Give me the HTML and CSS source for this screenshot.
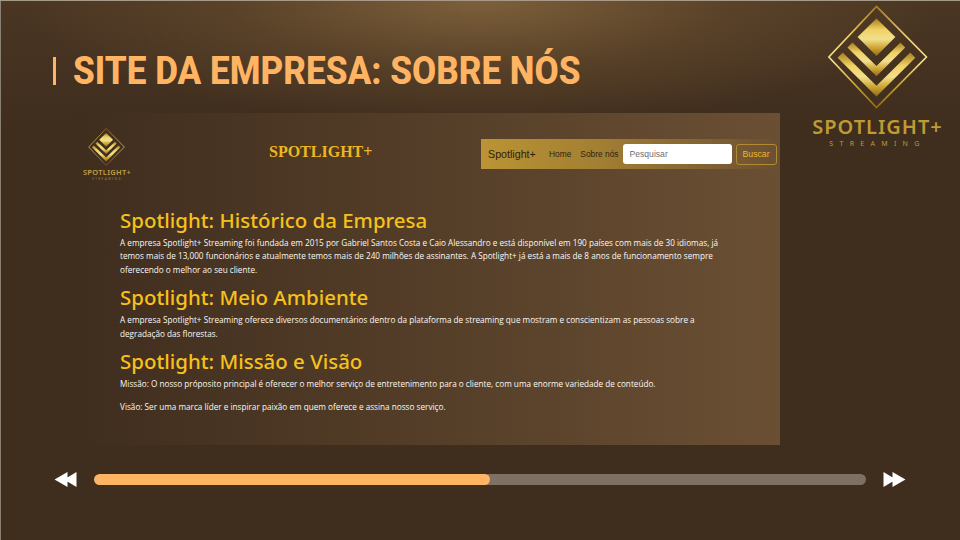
FILE: index.html
```html
<!DOCTYPE html>
<html lang="pt-BR">
<head>
    <meta charset="UTF-8">
    <title>Site da empresa: Sobre nós</title>
    <link rel="stylesheet" href="styles.css">
</head>
<body>
    <svg class="defs" width="0" height="0">
        <defs>
            <linearGradient id="gold" x1="0" y1="0" x2="0" y2="1">
                <stop offset="0" stop-color="#a87c1e"/>
                <stop offset="0.3" stop-color="#f0d264"/>
                <stop offset="0.55" stop-color="#f3e08c"/>
                <stop offset="0.8" stop-color="#c99f2e"/>
                <stop offset="1" stop-color="#8f6a18"/>
            </linearGradient>
            <symbol id="mark" viewBox="148 14 296 308">
                <polygon points="293,18 441,168 293,318 152,168" fill="none" stroke="url(#gold)" stroke-width="5"/>
                <polygon points="293,54 349,109 293,165 237,109" fill="url(#gold)"/>
                <polygon points="222,125 293,195 364,125 378,140 293,225 207,140" fill="url(#gold)"/>
                <polygon points="193,155 293,253 393,155 408,170 293,285 178,170" fill="url(#gold)"/>
            </symbol>
        </defs>
    </svg>

    <div class="slide">
        <header class="slide-head">
            <h1 class="slide-title"><span class="title-text">SITE DA EMPRESA: SOBRE NÓS</span></h1>
            <div class="brand">
                <svg class="brand-mark"><use href="#mark"/></svg>
                <div class="brand-name">SPOTLIGHT+</div>
                <div class="brand-sub">STREAMING</div>
            </div>
        </header>

        <main class="screen">
            <div class="site-top">
                <div class="site-logo">
                    <svg class="site-mark"><use href="#mark"/></svg>
                    <div class="site-logo-name">SPOTLIGHT+</div>
                    <div class="site-logo-sub">STREAMING</div>
                </div>
                <div class="site-title">SPOTLIGHT+</div>
                <nav class="navbar">
                    <span class="nav-brand">Spotlight+</span>
                    <a class="nav-link">Home</a>
                    <a class="nav-link">Sobre nós</a>
                    <input class="nav-search" type="text" placeholder="Pesquisar">
                    <button class="nav-button" type="button">Buscar</button>
                </nav>
            </div>

            <article class="about">
                <h2>Spotlight: Histórico da Empresa</h2>
                <p>A empresa Spotlight+ Streaming foi fundada em 2015 por Gabriel Santos Costa e Caio Alessandro e está disponível em 190 países com mais de 30 idiomas, já temos mais de 13,000 funcionários e atualmente temos mais de 240 milhões de assinantes. A Spotlight+ já está a mais de 8 anos de funcionamento sempre oferecendo o melhor ao seu cliente.</p>
                <h2>Spotlight: Meio Ambiente</h2>
                <p>A empresa Spotlight+ Streaming oferece diversos documentários dentro da plataforma de streaming que mostram e conscientizam as pessoas sobre a degradação das florestas.</p>
                <h2>Spotlight: Missão e Visão</h2>
                <p>Missão: O nosso próposito principal é oferecer o melhor serviço de entretenimento para o cliente, com uma enorme variedade de conteúdo.</p>
                <p class="gap">Visão: Ser uma marca líder e inspirar paixão em quem oferece e assina nosso serviço.</p>
            </article>
        </main>

        <footer class="player">
            <svg class="skip" viewBox="0 0 22 15"><path d="M0 7.5 13 0v15zM9.5 7.5 22 0v15z"/></svg>
            <div class="track"><div class="track-fill" style="width: 51.3%"></div></div>
            <svg class="skip" viewBox="0 0 22 15"><path d="M0 0 12.5 7.5 0 15zM9 0 22 7.5 9 15z"/></svg>
        </footer>
    </div>
</body>
</html>
```

FILE: styles.css
```css
html, body {
    margin: 0;
    padding: 0;
}
body {
    width: 960px;
    height: 540px;
    overflow: hidden;
    background-color: #3f2d1e;
}
.defs {
    position: absolute;
}
.slide {
    width: 960px;
    height: 540px;
    box-sizing: border-box;
    display: flex;
    flex-direction: column;
    background:
        radial-gradient(ellipse 460px 125px at 480px 0, rgba(128, 98, 60, 0.95), rgba(105, 78, 46, 0.5) 55%, rgba(63, 45, 30, 0) 100%),
        linear-gradient(180deg, #4a3623 0, #3f2d1e 130px);
    box-shadow: inset 0 1px 0 #a89a88, inset 1px 0 0 #8a8074;
}

/* header */
.slide-head {
    height: 113px;
    display: flex;
    justify-content: space-between;
    position: relative;
}
.slide-title {
    margin: 49px 0 0 53px;
    height: 44px;
    padding-left: 20px;
    font-family: "Roboto", sans-serif;
    font-size: 38px;
    font-weight: 800;
    line-height: 44px;
    color: #ffb463;
    white-space: nowrap;
    background: linear-gradient(#ffb463, #ffb463) no-repeat 0 8px / 3px 28px;
}
.title-text {
    display: inline-block;
    transform: scaleX(0.924);
    transform-origin: left center;
}
.brand {
    position: absolute;
    left: 810px;
    top: 5px;
    width: 135px;
    text-align: center;
}
.brand-mark {
    display: block;
    width: 101px;
    height: 104px;
    margin: 0 auto;
}
.brand-name {
    margin-top: 8px;
    font-family: "Noto Sans", sans-serif;
    font-size: 20px;
    font-weight: 600;
    line-height: 20px;
    letter-spacing: 1px;
    color: #bf9b34;
    white-space: nowrap;
}
.brand-sub {
    margin-top: 2px;
    font-family: "Noto Sans", sans-serif;
    font-size: 7px;
    line-height: 10px;
    letter-spacing: 6.3px;
    color: #bf9b34;
}

/* website screenshot */
.screen {
    width: 704px;
    height: 332px;
    margin-left: 76px;
    box-sizing: border-box;
    background: linear-gradient(90deg, #3f2d1e 0, #6a4f33 100%);
}
.site-top {
    height: 73px;
    display: flex;
    position: relative;
}
.site-logo {
    width: 62px;
    margin-top: 15px;
    text-align: center;
}
.site-mark {
    display: block;
    width: 39px;
    height: 38px;
    margin-left: 11px;
}
.site-logo-name {
    margin: 2px 0 0 6px;
    width: 50px;
    font-family: "Noto Sans", sans-serif;
    font-size: 7.5px;
    font-weight: 600;
    line-height: 9px;
    letter-spacing: 0.3px;
    color: #c0a04a;
    white-space: nowrap;
}
.site-logo-sub {
    margin-left: 6px;
    width: 50px;
    font-family: "Noto Sans", sans-serif;
    font-size: 3px;
    line-height: 4px;
    letter-spacing: 1.4px;
    color: #a5842c;
}
.site-title {
    margin: 30px 0 0 131px;
    font-family: "Liberation Serif", serif;
    font-size: 16px;
    font-weight: 700;
    line-height: 18px;
    color: #eeb71f;
}
.navbar {
    position: absolute;
    left: 405px;
    top: 26px;
    width: 296px;
    height: 30px;
    box-sizing: border-box;
    display: flex;
    align-items: center;
    padding-left: 7px;
    background: linear-gradient(90deg, #bb9434 0, #a27f32 40%, #6a4f33 100%);
    font-family: "Liberation Sans", sans-serif;
    white-space: nowrap;
}
.nav-brand {
    width: 48px;
    font-size: 10.7px;
    color: #2c2110;
    margin-right: 13px;
}
.nav-link {
    font-size: 8.4px;
    color: #2f2410;
    margin-right: 9px;
}
.nav-link:last-of-type {
    margin-right: 4px;
}
.nav-search {
    width: 109px;
    height: 20px;
    box-sizing: border-box;
    padding: 0 7px;
    border: none;
    border-radius: 3px;
    background-color: #fff;
    font-family: "Liberation Sans", sans-serif;
    font-size: 8.6px;
    margin-right: 4px;
}
.nav-search::placeholder {
    color: #6f6f6f;
    opacity: 1;
}
.nav-button {
    width: 41px;
    height: 21px;
    padding: 0;
    border: 1px solid #b08a35;
    border-radius: 3px;
    background: transparent;
    font-family: "Liberation Sans", sans-serif;
    font-size: 8.7px;
    color: #eeb52a;
}

/* about text */
.about {
    padding: 19.5px 60px 0 44px;
    font-family: "Open Sans", sans-serif;
    color: #fff;
}
.about h2 {
    margin: 0 0 2.5px;
    font-family: "Noto Sans", sans-serif;
    font-size: 20.45px;
    font-weight: 500;
    line-height: 28px;
    color: #f6c11b;
}
.about p {
    margin: 0 0 7px;
    font-size: 8.2px;
    line-height: 13.3px;
    color: #fbf8f2;
}
.about p.gap {
    margin-top: 9px;
}

/* progress bar */
.player {
    display: flex;
    align-items: center;
    gap: 17px;
    margin: 27px 0 0 54px;
    width: 852px;
}
.skip {
    width: 23px;
    height: 15px;
    fill: #fff;
    flex: none;
}
.track {
    flex: 1;
    height: 11px;
    border-radius: 6px;
    background-color: #7e7064;
    overflow: hidden;
}
.track-fill {
    height: 100%;
    border-radius: 6px;
    background-color: #ffb463;
}
```
